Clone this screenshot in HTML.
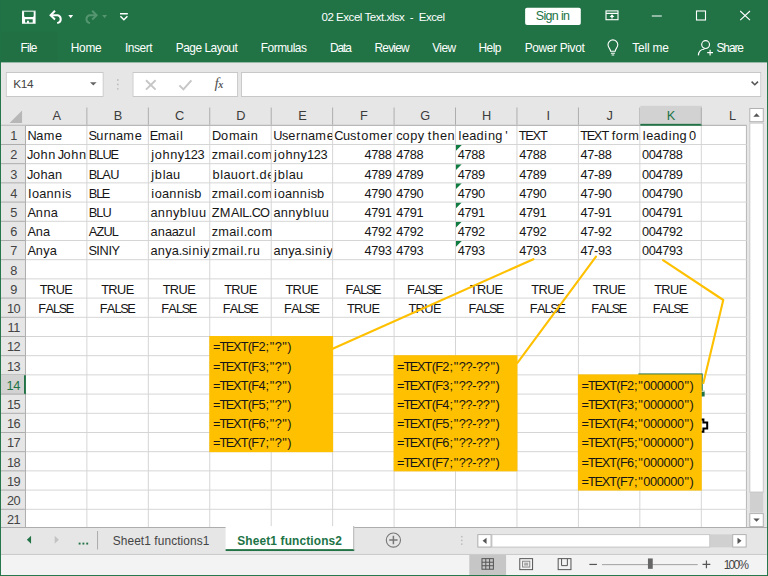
<!DOCTYPE html>
<html><head><meta charset="utf-8"><title>Excel</title>
<style>
*{box-sizing:border-box;margin:0;padding:0}
html,body{width:768px;height:576px;overflow:hidden;background:#e6e6e6}
body{font-family:"Liberation Sans",sans-serif}
#root{position:absolute;left:0;top:0;width:800px;height:600px;transform:scale(.96);transform-origin:0 0;background:#e6e6e6;overflow:hidden}
#root div,#root span,#root svg,#root i,#root b{position:absolute}
.ui{font-size:12px;color:#fff;white-space:nowrap;line-height:16px}
#top{left:0;top:0;width:800px;height:64.8px;background:#217346}
#frame{left:0;top:0;width:800px;height:600px;border:1px solid #217346;border-top:0;pointer-events:none}
#grid{left:0;top:110px;width:778px;height:439.4px;overflow:hidden}
.white{left:26px;top:20px;width:752px;height:420px;background:#fff;border-right:1px solid #ababab}
.vl{top:0;width:1px;height:439px;background:#d4d4d4}
.hl{left:0;height:1px;width:778px;background:#d4d4d4}
.c{width:63px;height:20px;overflow:hidden;white-space:nowrap;font-size:13.3px;line-height:20px;color:#161616}
.c span{left:2px;top:1px}
.c.ov{overflow:visible}
.c.ctr span{left:0;width:63px;text-align:center}
.c.rt span{left:auto;right:3px}
.tri{left:0;top:0;width:0;height:0;border-top:6px solid #107c41;border-right:6px solid transparent}
.chbar{left:0;top:0;width:778px;height:21px;background:#e6e6e6;border-bottom:1px solid #ababab}
.ch{top:0;height:21px;text-align:center;font-size:13.3px;line-height:21px;color:#3c3c3c}
.ch .sep{right:0;top:2px;width:1px;height:18px;background:#ababab}
.chs{background:#d2d2d2;color:#217346;border-bottom:2px solid #217346}
.rhbar{left:0;top:21px;width:27px;height:418px;background:#e6e6e6;border-right:1px solid #ababab}
.rh{left:0;width:26px;height:20px;padding-left:2.4px;letter-spacing:-.4px;text-align:center;font-size:13.3px;line-height:22.5px;color:#444;border-bottom:1px solid #ababab}
.rhs{background:#d2d2d2;color:#217346;border-right:2px solid #217346;width:27px}
.corner{left:0;top:0}
.or{background:#ffc000}
.sel{border:2px solid #217346}
.fh{width:6px;height:6px;background:#217346;border:1px solid #fff;border-right:0;border-bottom:0}
.lines{left:0;top:0}
.t{white-space:pre}

.k-19{margin:0 -0.95px}.k-17{margin:0 -0.85px}.k-16{margin:0 -0.8px}.k-14{margin:0 -0.7px}.k-13{margin:0 -0.65px}.k-12{margin:0 -0.6px}.k-11{margin:0 -0.55px}.k-10{margin:0 -0.5px}.k-9{margin:0 -0.45px}.k-8{margin:0 -0.4px}.k-7{margin:0 -0.35px}.k-6{margin:0 -0.3px}.k-4{margin:0 -0.2px}.k-3{margin:0 -0.15px}.k1{margin:0 0.05px}.k3{margin:0 0.15px}.k5{margin:0 0.25px}.k6{margin:0 0.3px}.k9{margin:0 0.45px}.k10{margin:0 0.5px}.k13{margin:0 0.65px}.k19{margin:0 0.95px}
</style></head><body>
<div id="root">
<div id="top">
<div style="left:0;top:33px;width:60px;height:31px;background:#207044"></div>
<span class="t" style="left:334.90px;top:10.05px;font-size:12px;line-height:16px;letter-spacing:-0.488px;color:#fff;">02 Excel Text.xlsx  -  Excel</span>
<div style="left:547px;top:7.5px;width:57.5px;height:18.5px;background:#fff;border-radius:2px"></div>
<span class="t" style="left:558.12px;top:8.61px;font-size:13px;line-height:16px;letter-spacing:-0.688px;color:#217346;">Sign in</span>
<span class="t" style="left:21.35px;top:41.99px;font-size:12.4px;line-height:16px;letter-spacing:-0.758px;color:#fff;transform:scaleY(1.07);transform-origin:0 7.86px;">File</span>
<span class="t" style="left:73.70px;top:41.99px;font-size:12.4px;line-height:16px;letter-spacing:-0.262px;color:#fff;transform:scaleY(1.07);transform-origin:0 7.86px;">Home</span>
<span class="t" style="left:130.21px;top:41.99px;font-size:12.4px;line-height:16px;letter-spacing:-0.473px;color:#fff;transform:scaleY(1.07);transform-origin:0 7.86px;">Insert</span>
<span class="t" style="left:183.07px;top:41.99px;font-size:12.4px;line-height:16px;letter-spacing:-0.505px;color:#fff;transform:scaleY(1.07);transform-origin:0 7.86px;">Page Layout</span>
<span class="t" style="left:271.61px;top:41.99px;font-size:12.4px;line-height:16px;letter-spacing:-0.500px;color:#fff;transform:scaleY(1.07);transform-origin:0 7.86px;">Formulas</span>
<span class="t" style="left:343.75px;top:41.99px;font-size:12.4px;line-height:16px;letter-spacing:-1.092px;color:#fff;transform:scaleY(1.07);transform-origin:0 7.86px;">Data</span>
<span class="t" style="left:390.10px;top:41.99px;font-size:12.4px;line-height:16px;letter-spacing:-0.788px;color:#fff;transform:scaleY(1.07);transform-origin:0 7.86px;">Review</span>
<span class="t" style="left:450.26px;top:41.99px;font-size:12.4px;line-height:16px;letter-spacing:-0.638px;color:#fff;transform:scaleY(1.07);transform-origin:0 7.86px;">View</span>
<span class="t" style="left:498.44px;top:41.99px;font-size:12.4px;line-height:16px;letter-spacing:-0.515px;color:#fff;transform:scaleY(1.07);transform-origin:0 7.86px;">Help</span>
<span class="t" style="left:546.61px;top:41.99px;font-size:12.4px;line-height:16px;letter-spacing:-0.366px;color:#fff;transform:scaleY(1.07);transform-origin:0 7.86px;">Power Pivot</span>
<span class="t" style="left:658.59px;top:41.99px;font-size:12.4px;line-height:16px;letter-spacing:-0.166px;color:#fff;transform:scaleY(1.07);transform-origin:0 7.86px;">Tell me</span>
<span class="t" style="left:746.35px;top:41.99px;font-size:12.4px;line-height:16px;letter-spacing:-1.111px;color:#fff;transform:scaleY(1.07);transform-origin:0 7.86px;">Share</span>
<svg style="left:0;top:0" width="800" height="64" viewBox="0 0 768 61.44">
<g fill="none" stroke="#fff" stroke-width="1.25">
<!-- save -->
<path fill="#fff" stroke="none" fill-rule="evenodd" d="M22 10.5H35.6V23.8H22Z M24.1 11.7H33.7V16.2L32.9 16.9H24.9L24.1 16.2Z M25.1 19.2H32.7V22.6H28.9V20.7H27V22.6H25.1Z"/>
<path fill="#217346" stroke="none" opacity=".45" d="M22 10.3H35.6V11.2H22Z"/>
<!-- undo -->
<path d="M51 15.3H57.6A3.9 3.9 0 0 1 58.6 22.6L57.2 23" stroke-width="2"/>
<path d="M55 10.8L50.6 15.3L55 19.4" stroke-width="2"/>
<!-- redo (dim) -->
<g stroke="#559671">
<path d="M96.2 15.3H89.6A3.9 3.9 0 0 0 88.6 22.6L90 23" stroke-width="2"/>
<path d="M92.2 10.8L96.6 15.3L92.2 19.4" stroke-width="2"/>
</g>
<!-- customize -->
<path d="M120 13.7H127.8" stroke-width="1.4"/>
<path d="M120.4 16.3L123.9 19.8L127.4 16.3" stroke-width="1.5"/>
<!-- ribbon display options -->
<rect x="606" y="10.9" width="12" height="8.8" stroke-width="1.1"/>
<path d="M606 13.4H618" stroke-width="1.1"/>
<path d="M612 18.6V15.4" stroke-width="1.4"/><path d="M609.6 16.9L612 14.3L614.4 16.9Z" fill="#fff" stroke="none"/>
<!-- min / max / close -->
<path d="M651.8 16H661.8" stroke-width="1.1"/>
<rect x="696.5" y="11" width="9" height="9" stroke-width="1.1"/>
<path d="M740.2 11L750 20.2M750 11L740.2 20.2" stroke-width="1.1"/>
<!-- bulb -->
<path d="M610.6 51.2C610.6 48.8 608 47.8 608 44.8A4.9 4.9 0 0 1 617.8 44.8C617.8 47.8 615.2 48.8 615.2 51.2Z" stroke-width="1.1"/>
<path d="M610.9 53.2H614.9M611.6 55H614.2" stroke-width="1.1"/>
<!-- share person -->
<circle cx="705.6" cy="44.6" r="3.9" stroke-width="1.15"/>
<path d="M698.4 55.4C698.6 51.2 701.4 49.2 704.4 49.2" stroke-width="1.15"/>
<path d="M707.2 52.6H713M710.1 49.7V55.5" stroke-width="1.15"/>
</g>
<g fill="#fff"><path d="M68.3 15.1H73.1L70.7 18.3Z"/></g>
<g fill="#559671"><path d="M102.2 15.1H107L104.6 18.3Z"/></g>
</svg>
</div>
<div style="left:6.15px;top:75.21px;width:101.56px;height:25.83px;background:#fff;border:1px solid #c6c6c6"></div>
<div style="left:138.23px;top:75.21px;width:109.69px;height:25.83px;background:#fff;border:1px solid #c6c6c6"></div>
<div style="left:251.04px;top:75.21px;width:542.40px;height:25.83px;background:#fff;border:1px solid #c6c6c6"></div>
<span class="t" style="left:13.85px;top:80.47px;font-size:12.3px;line-height:16px;letter-spacing:-0.370px;color:#444;">K14</span>
<svg style="left:0;top:64px" width="800" height="46" viewBox="0 61.44 768 44.16">
<path d="M90 82.2H96.6L93.3 85.5Z" fill="#666"/>
<g fill="#bdbdbd"><circle cx="117.8" cy="80" r="0.9"/><circle cx="117.8" cy="84.4" r="0.9"/><circle cx="117.8" cy="88.8" r="0.9"/></g>
<path d="M146 80.2L155.6 89.6M155.6 80.2L146 89.6" stroke="#c6c6c6" stroke-width="1.9" fill="none"/>
<path d="M179.4 85.4L183.4 89.4L191.4 80.4" stroke="#c6c6c6" stroke-width="2" fill="none"/>
<path d="M751.6 81.6L754.8 84.8L758 81.6" stroke="#555" stroke-width="1.5" fill="none"/>
</svg>
<span class="t" style="left:223.54px;top:79.06px;font-family:'Liberation Serif',serif;font-style:italic;font-weight:normal;font-size:16px;line-height:16px;color:#555;letter-spacing:-.6px">f<span style="position:static;font-size:10.5px;font-weight:bold">x</span></span>
<div id="grid">
<div class="white"></div>
<div class="vl" style="left:26px"></div>
<div class="vl" style="left:90px"></div>
<div class="vl" style="left:154px"></div>
<div class="vl" style="left:218px"></div>
<div class="vl" style="left:282px"></div>
<div class="vl" style="left:346px"></div>
<div class="vl" style="left:410px"></div>
<div class="vl" style="left:474px"></div>
<div class="vl" style="left:538px"></div>
<div class="vl" style="left:602px"></div>
<div class="vl" style="left:666px"></div>
<div class="vl" style="left:730px"></div>
<div class="vl" style="left:794px"></div>
<div class="hl" style="top:20px"></div>
<div class="hl" style="top:40px"></div>
<div class="hl" style="top:60px"></div>
<div class="hl" style="top:80px"></div>
<div class="hl" style="top:100px"></div>
<div class="hl" style="top:120px"></div>
<div class="hl" style="top:140px"></div>
<div class="hl" style="top:160px"></div>
<div class="hl" style="top:180px"></div>
<div class="hl" style="top:200px"></div>
<div class="hl" style="top:220px"></div>
<div class="hl" style="top:240px"></div>
<div class="hl" style="top:260px"></div>
<div class="hl" style="top:280px"></div>
<div class="hl" style="top:300px"></div>
<div class="hl" style="top:320px"></div>
<div class="hl" style="top:340px"></div>
<div class="hl" style="top:360px"></div>
<div class="hl" style="top:380px"></div>
<div class="hl" style="top:400px"></div>
<div class="hl" style="top:420px"></div>
<div class="hl" style="top:440px"></div>
<div class="hl" style="top:460px"></div>
<div class="sel" style="left:665px;top:279px;width:67px;height:23px"></div>
<div class="fh" style="left:728px;top:297px"></div>
<svg style="left:0;top:0" width="778" height="439" viewBox="0 105.6 746.88 421.44"><path d="M697.6 419.6H703.4V422.6H707.2V428.6H703.4V431.8H697.6V428.6H693.8V422.6H697.6Z" fill="#fff" stroke="#000" stroke-width="2"/></svg>
<div class="or" style="left:218px;top:240px;width:129px;height:121px"></div>
<div class="or" style="left:410px;top:260px;width:129px;height:121px"></div>
<div class="or" style="left:602px;top:280px;width:129px;height:121px"></div>
<div class="c" style="left:27px;top:21px"><span style=""><a class="k-6">N</a><a class="k-4">a</a><a class="k9">m</a><a class="k6">e</a></span></div>
<div class="c" style="left:91px;top:21px"><span style=""><a class="k-19">S</a><a class="k6">u</a><a class="k6">r</a><a class="k6">n</a><a class="k-4">a</a><a class="k9">m</a><a class="k6">e</a></span></div>
<div class="c" style="left:155px;top:21px"><span style=""><a class="k-19">E</a><a class="k9">m</a><a class="k-4">a</a><a class="k10">i</a><a class="k10">l</a></span></div>
<div class="c" style="left:219px;top:21px"><span style=""><a class="k-6">D</a><a class="k6">o</a><a class="k9">m</a><a class="k-4">a</a><a class="k10">i</a><a class="k6">n</a></span></div>
<div class="c" style="left:283px;top:21px"><span style=""><a class="k-6">U</a><a class="k-7">s</a><a class="k6">e</a><a class="k6">r</a><a class="k6">n</a><a class="k-4">a</a><a class="k9">m</a><a class="k6">e</a></span></div>
<div class="c" style="left:347px;top:21px"><span style=""><a class="k-16">C</a><a class="k6">u</a><a class="k-7">s</a><a class="k13">t</a><a class="k6">o</a><a class="k9">m</a><a class="k6">e</a><a class="k6">r</a></span></div>
<div class="c" style="left:411px;top:21px"><span style=""><a class="k-7">c</a><a class="k6">o</a><a class="k6">p</a><a class="k3">y</a><a class="k-7"> </a><a class="k13">t</a><a class="k6">h</a><a class="k6">e</a><a class="k6">n</a></span></div>
<div class="c" style="left:475px;top:21px"><span style=""><a class="k10">l</a><a class="k6">e</a><a class="k-4">a</a><a class="k6">d</a><a class="k10">i</a><a class="k6">n</a><a class="k-4">g</a><a class="k-7"> </a><a class="k5">'</a></span></div>
<div class="c" style="left:539px;top:21px"><span style=""><a class="k-11">T</a><a class="k-19">E</a><a class="k-9">X</a><a class="k-11">T</a></span></div>
<div class="c" style="left:603px;top:21px"><span style=""><a class="k-11">T</a><a class="k-19">E</a><a class="k-9">X</a><a class="k-11">T</a><a class="k-7"> </a><a class="k3">f</a><a class="k6">o</a><a class="k6">r</a><a class="k9">m</a></span></div>
<div class="c ov" style="left:667px;top:21px"><span style=""><a class="k10">l</a><a class="k6">e</a><a class="k-4">a</a><a class="k6">d</a><a class="k10">i</a><a class="k6">n</a><a class="k-4">g</a><a class="k-7"> </a><a class="k-4">0</a></span></div>
<div class="c" style="left:27px;top:41px"><span style=""><a class="k-17">J</a><a class="k6">o</a><a class="k6">h</a><a class="k6">n</a><a class="k-7"> </a><a class="k-17">J</a><a class="k6">o</a><a class="k6">h</a><a class="k6">n</a></span></div>
<div class="c" style="left:91px;top:41px"><span style=""><a class="k-9">B</a><a class="k-14">L</a><a class="k-6">U</a><a class="k-19">E</a></span></div>
<div class="c" style="left:155px;top:41px"><span style=""><a class="k10">j</a><a class="k6">o</a><a class="k6">h</a><a class="k6">n</a><a class="k3">y</a><a class="k-4">1</a><a class="k-4">2</a><a class="k-4">3</a></span></div>
<div class="c" style="left:219px;top:41px"><span style=""><a class="k-7">z</a><a class="k9">m</a><a class="k-4">a</a><a class="k10">i</a><a class="k10">l</a><a class="k3">.</a><a class="k-7">c</a><a class="k6">o</a><a class="k9">m</a></span></div>
<div class="c" style="left:283px;top:41px"><span style=""><a class="k10">j</a><a class="k6">o</a><a class="k6">h</a><a class="k6">n</a><a class="k3">y</a><a class="k-4">1</a><a class="k-4">2</a><a class="k-4">3</a></span></div>
<div class="c rt" style="left:347px;top:41px"><span style="right:2px"><a class="k-4">4</a><a class="k-4">7</a><a class="k-4">8</a><a class="k-4">8</a></span></div>
<div class="c" style="left:411px;top:41px"><span style=""><a class="k-4">4</a><a class="k-4">7</a><a class="k-4">8</a><a class="k-4">8</a></span></div>
<div class="c" style="left:475px;top:41px"><i class="tri"></i><span style=""><a class="k-4">4</a><a class="k-4">7</a><a class="k-4">8</a><a class="k-4">8</a></span></div>
<div class="c" style="left:539px;top:41px"><span style=""><a class="k-4">4</a><a class="k-4">7</a><a class="k-4">8</a><a class="k-4">8</a></span></div>
<div class="c" style="left:603px;top:41px"><span style=""><a class="k-4">4</a><a class="k-4">7</a><a class="k-4">-</a><a class="k-4">8</a><a class="k-4">8</a></span></div>
<div class="c ov" style="left:667px;top:41px"><span style=""><a class="k-4">0</a><a class="k-4">0</a><a class="k-4">4</a><a class="k-4">7</a><a class="k-4">8</a><a class="k-4">8</a></span></div>
<div class="c" style="left:27px;top:61px"><span style=""><a class="k-17">J</a><a class="k6">o</a><a class="k6">h</a><a class="k-4">a</a><a class="k6">n</a></span></div>
<div class="c" style="left:91px;top:61px"><span style=""><a class="k-9">B</a><a class="k-14">L</a><a class="k-9">A</a><a class="k-6">U</a></span></div>
<div class="c" style="left:155px;top:61px"><span style=""><a class="k10">j</a><a class="k6">b</a><a class="k10">l</a><a class="k-4">a</a><a class="k6">u</a></span></div>
<div class="c" style="left:219px;top:61px"><span style=""><a class="k6">b</a><a class="k10">l</a><a class="k-4">a</a><a class="k6">u</a><a class="k6">o</a><a class="k6">r</a><a class="k13">t</a><a class="k3">.</a><a class="k6">d</a><a class="k6">e</a></span></div>
<div class="c" style="left:283px;top:61px"><span style=""><a class="k10">j</a><a class="k6">b</a><a class="k10">l</a><a class="k-4">a</a><a class="k6">u</a></span></div>
<div class="c rt" style="left:347px;top:61px"><span style="right:2px"><a class="k-4">4</a><a class="k-4">7</a><a class="k-4">8</a><a class="k-4">9</a></span></div>
<div class="c" style="left:411px;top:61px"><span style=""><a class="k-4">4</a><a class="k-4">7</a><a class="k-4">8</a><a class="k-4">9</a></span></div>
<div class="c" style="left:475px;top:61px"><i class="tri"></i><span style=""><a class="k-4">4</a><a class="k-4">7</a><a class="k-4">8</a><a class="k-4">9</a></span></div>
<div class="c" style="left:539px;top:61px"><span style=""><a class="k-4">4</a><a class="k-4">7</a><a class="k-4">8</a><a class="k-4">9</a></span></div>
<div class="c" style="left:603px;top:61px"><span style=""><a class="k-4">4</a><a class="k-4">7</a><a class="k-4">-</a><a class="k-4">8</a><a class="k-4">9</a></span></div>
<div class="c ov" style="left:667px;top:61px"><span style=""><a class="k-4">0</a><a class="k-4">0</a><a class="k-4">4</a><a class="k-4">7</a><a class="k-4">8</a><a class="k-4">9</a></span></div>
<div class="c" style="left:27px;top:81px"><span style=""><a class="k3">I</a><a class="k6">o</a><a class="k-4">a</a><a class="k6">n</a><a class="k6">n</a><a class="k10">i</a><a class="k-7">s</a></span></div>
<div class="c" style="left:91px;top:81px"><span style=""><a class="k-9">B</a><a class="k-14">L</a><a class="k-19">E</a></span></div>
<div class="c" style="left:155px;top:81px"><span style=""><a class="k10">i</a><a class="k6">o</a><a class="k-4">a</a><a class="k6">n</a><a class="k6">n</a><a class="k10">i</a><a class="k-7">s</a><a class="k6">b</a></span></div>
<div class="c" style="left:219px;top:81px"><span style=""><a class="k-7">z</a><a class="k9">m</a><a class="k-4">a</a><a class="k10">i</a><a class="k10">l</a><a class="k3">.</a><a class="k-7">c</a><a class="k6">o</a><a class="k9">m</a></span></div>
<div class="c" style="left:283px;top:81px"><span style=""><a class="k10">i</a><a class="k6">o</a><a class="k-4">a</a><a class="k6">n</a><a class="k6">n</a><a class="k10">i</a><a class="k-7">s</a><a class="k6">b</a></span></div>
<div class="c rt" style="left:347px;top:81px"><span style="right:2px"><a class="k-4">4</a><a class="k-4">7</a><a class="k-4">9</a><a class="k-4">0</a></span></div>
<div class="c" style="left:411px;top:81px"><span style=""><a class="k-4">4</a><a class="k-4">7</a><a class="k-4">9</a><a class="k-4">0</a></span></div>
<div class="c" style="left:475px;top:81px"><i class="tri"></i><span style=""><a class="k-4">4</a><a class="k-4">7</a><a class="k-4">9</a><a class="k-4">0</a></span></div>
<div class="c" style="left:539px;top:81px"><span style=""><a class="k-4">4</a><a class="k-4">7</a><a class="k-4">9</a><a class="k-4">0</a></span></div>
<div class="c" style="left:603px;top:81px"><span style=""><a class="k-4">4</a><a class="k-4">7</a><a class="k-4">-</a><a class="k-4">9</a><a class="k-4">0</a></span></div>
<div class="c ov" style="left:667px;top:81px"><span style=""><a class="k-4">0</a><a class="k-4">0</a><a class="k-4">4</a><a class="k-4">7</a><a class="k-4">9</a><a class="k-4">0</a></span></div>
<div class="c" style="left:27px;top:101px"><span style=""><a class="k-9">A</a><a class="k6">n</a><a class="k6">n</a><a class="k-4">a</a></span></div>
<div class="c" style="left:91px;top:101px"><span style=""><a class="k-9">B</a><a class="k-14">L</a><a class="k-6">U</a></span></div>
<div class="c" style="left:155px;top:101px"><span style=""><a class="k-4">a</a><a class="k6">n</a><a class="k6">n</a><a class="k3">y</a><a class="k6">b</a><a class="k10">l</a><a class="k6">u</a><a class="k6">u</a></span></div>
<div class="c" style="left:219px;top:101px"><span style=""><a class="k-11">Z</a><a class="k19">M</a><a class="k-9">A</a><a class="k3">I</a><a class="k-14">L</a><a class="k3">.</a><a class="k-16">C</a><a class="k-3">O</a></span></div>
<div class="c" style="left:283px;top:101px"><span style=""><a class="k-4">a</a><a class="k6">n</a><a class="k6">n</a><a class="k3">y</a><a class="k6">b</a><a class="k10">l</a><a class="k6">u</a><a class="k6">u</a></span></div>
<div class="c rt" style="left:347px;top:101px"><span style="right:2px"><a class="k-4">4</a><a class="k-4">7</a><a class="k-4">9</a><a class="k-4">1</a></span></div>
<div class="c" style="left:411px;top:101px"><span style=""><a class="k-4">4</a><a class="k-4">7</a><a class="k-4">9</a><a class="k-4">1</a></span></div>
<div class="c" style="left:475px;top:101px"><i class="tri"></i><span style=""><a class="k-4">4</a><a class="k-4">7</a><a class="k-4">9</a><a class="k-4">1</a></span></div>
<div class="c" style="left:539px;top:101px"><span style=""><a class="k-4">4</a><a class="k-4">7</a><a class="k-4">9</a><a class="k-4">1</a></span></div>
<div class="c" style="left:603px;top:101px"><span style=""><a class="k-4">4</a><a class="k-4">7</a><a class="k-4">-</a><a class="k-4">9</a><a class="k-4">1</a></span></div>
<div class="c ov" style="left:667px;top:101px"><span style=""><a class="k-4">0</a><a class="k-4">0</a><a class="k-4">4</a><a class="k-4">7</a><a class="k-4">9</a><a class="k-4">1</a></span></div>
<div class="c" style="left:27px;top:121px"><span style=""><a class="k-9">A</a><a class="k6">n</a><a class="k-4">a</a></span></div>
<div class="c" style="left:91px;top:121px"><span style=""><a class="k-9">A</a><a class="k-11">Z</a><a class="k-6">U</a><a class="k-14">L</a></span></div>
<div class="c" style="left:155px;top:121px"><span style=""><a class="k-4">a</a><a class="k6">n</a><a class="k-4">a</a><a class="k-4">a</a><a class="k-7">z</a><a class="k6">u</a><a class="k10">l</a></span></div>
<div class="c ov" style="left:219px;top:121px"><span style=""><a class="k-7">z</a><a class="k9">m</a><a class="k-4">a</a><a class="k10">i</a><a class="k10">l</a><a class="k3">.</a><a class="k-7">c</a><a class="k6">o</a><a class="k9">m</a></span></div>
<div class="c rt" style="left:347px;top:121px"><span style="right:2px"><a class="k-4">4</a><a class="k-4">7</a><a class="k-4">9</a><a class="k-4">2</a></span></div>
<div class="c" style="left:411px;top:121px"><span style=""><a class="k-4">4</a><a class="k-4">7</a><a class="k-4">9</a><a class="k-4">2</a></span></div>
<div class="c" style="left:475px;top:121px"><i class="tri"></i><span style=""><a class="k-4">4</a><a class="k-4">7</a><a class="k-4">9</a><a class="k-4">2</a></span></div>
<div class="c" style="left:539px;top:121px"><span style=""><a class="k-4">4</a><a class="k-4">7</a><a class="k-4">9</a><a class="k-4">2</a></span></div>
<div class="c" style="left:603px;top:121px"><span style=""><a class="k-4">4</a><a class="k-4">7</a><a class="k-4">-</a><a class="k-4">9</a><a class="k-4">2</a></span></div>
<div class="c ov" style="left:667px;top:121px"><span style=""><a class="k-4">0</a><a class="k-4">0</a><a class="k-4">4</a><a class="k-4">7</a><a class="k-4">9</a><a class="k-4">2</a></span></div>
<div class="c" style="left:27px;top:141px"><span style=""><a class="k-9">A</a><a class="k6">n</a><a class="k3">y</a><a class="k-4">a</a></span></div>
<div class="c" style="left:91px;top:141px"><span style=""><a class="k-19">S</a><a class="k3">I</a><a class="k-6">N</a><a class="k3">I</a><a class="k-19">Y</a></span></div>
<div class="c" style="left:155px;top:141px"><span style=""><a class="k-4">a</a><a class="k6">n</a><a class="k3">y</a><a class="k-4">a</a><a class="k3">.</a><a class="k-7">s</a><a class="k10">i</a><a class="k6">n</a><a class="k10">i</a><a class="k3">y</a></span></div>
<div class="c" style="left:219px;top:141px"><span style=""><a class="k-7">z</a><a class="k9">m</a><a class="k-4">a</a><a class="k10">i</a><a class="k10">l</a><a class="k3">.</a><a class="k6">r</a><a class="k6">u</a></span></div>
<div class="c" style="left:283px;top:141px"><span style=""><a class="k-4">a</a><a class="k6">n</a><a class="k3">y</a><a class="k-4">a</a><a class="k3">.</a><a class="k-7">s</a><a class="k10">i</a><a class="k6">n</a><a class="k10">i</a><a class="k3">y</a></span></div>
<div class="c rt" style="left:347px;top:141px"><span style="right:2px"><a class="k-4">4</a><a class="k-4">7</a><a class="k-4">9</a><a class="k-4">3</a></span></div>
<div class="c" style="left:411px;top:141px"><span style=""><a class="k-4">4</a><a class="k-4">7</a><a class="k-4">9</a><a class="k-4">3</a></span></div>
<div class="c" style="left:475px;top:141px"><i class="tri"></i><span style=""><a class="k-4">4</a><a class="k-4">7</a><a class="k-4">9</a><a class="k-4">3</a></span></div>
<div class="c" style="left:539px;top:141px"><span style=""><a class="k-4">4</a><a class="k-4">7</a><a class="k-4">9</a><a class="k-4">3</a></span></div>
<div class="c" style="left:603px;top:141px"><span style=""><a class="k-4">4</a><a class="k-4">7</a><a class="k-4">-</a><a class="k-4">9</a><a class="k-4">3</a></span></div>
<div class="c ov" style="left:667px;top:141px"><span style=""><a class="k-4">0</a><a class="k-4">0</a><a class="k-4">4</a><a class="k-4">7</a><a class="k-4">9</a><a class="k-4">3</a></span></div>
<div class="c ctr" style="left:27px;top:181px"><span style=""><a class="k-6">T</a><a class="k-10">R</a><a class="k1">U</a><a class="k-13">E</a></span></div>
<div class="c ctr" style="left:91px;top:181px"><span style=""><a class="k-6">T</a><a class="k-10">R</a><a class="k1">U</a><a class="k-13">E</a></span></div>
<div class="c ctr" style="left:155px;top:181px"><span style=""><a class="k-6">T</a><a class="k-10">R</a><a class="k1">U</a><a class="k-13">E</a></span></div>
<div class="c ctr" style="left:219px;top:181px"><span style=""><a class="k-6">T</a><a class="k-10">R</a><a class="k1">U</a><a class="k-13">E</a></span></div>
<div class="c ctr" style="left:283px;top:181px"><span style=""><a class="k-6">T</a><a class="k-10">R</a><a class="k1">U</a><a class="k-13">E</a></span></div>
<div class="c ctr" style="left:347px;top:181px"><span style=""><a class="k-9">F</a><a class="k-6">A</a><a class="k-12">L</a><a class="k-16">S</a><a class="k-16">E</a></span></div>
<div class="c ctr" style="left:411px;top:181px"><span style=""><a class="k-9">F</a><a class="k-6">A</a><a class="k-12">L</a><a class="k-16">S</a><a class="k-16">E</a></span></div>
<div class="c ctr" style="left:475px;top:181px"><span style=""><a class="k-6">T</a><a class="k-10">R</a><a class="k1">U</a><a class="k-13">E</a></span></div>
<div class="c ctr" style="left:539px;top:181px"><span style=""><a class="k-6">T</a><a class="k-10">R</a><a class="k1">U</a><a class="k-13">E</a></span></div>
<div class="c ctr" style="left:603px;top:181px"><span style=""><a class="k-6">T</a><a class="k-10">R</a><a class="k1">U</a><a class="k-13">E</a></span></div>
<div class="c ctr" style="left:667px;top:181px"><span style=""><a class="k-6">T</a><a class="k-10">R</a><a class="k1">U</a><a class="k-13">E</a></span></div>
<div class="c ctr" style="left:27px;top:201px"><span style=""><a class="k-9">F</a><a class="k-6">A</a><a class="k-12">L</a><a class="k-16">S</a><a class="k-16">E</a></span></div>
<div class="c ctr" style="left:91px;top:201px"><span style=""><a class="k-9">F</a><a class="k-6">A</a><a class="k-12">L</a><a class="k-16">S</a><a class="k-16">E</a></span></div>
<div class="c ctr" style="left:155px;top:201px"><span style=""><a class="k-9">F</a><a class="k-6">A</a><a class="k-12">L</a><a class="k-16">S</a><a class="k-16">E</a></span></div>
<div class="c ctr" style="left:219px;top:201px"><span style=""><a class="k-9">F</a><a class="k-6">A</a><a class="k-12">L</a><a class="k-16">S</a><a class="k-16">E</a></span></div>
<div class="c ctr" style="left:283px;top:201px"><span style=""><a class="k-9">F</a><a class="k-6">A</a><a class="k-12">L</a><a class="k-16">S</a><a class="k-16">E</a></span></div>
<div class="c ctr" style="left:347px;top:201px"><span style=""><a class="k-6">T</a><a class="k-10">R</a><a class="k1">U</a><a class="k-13">E</a></span></div>
<div class="c ctr" style="left:411px;top:201px"><span style=""><a class="k-6">T</a><a class="k-10">R</a><a class="k1">U</a><a class="k-13">E</a></span></div>
<div class="c ctr" style="left:475px;top:201px"><span style=""><a class="k-9">F</a><a class="k-6">A</a><a class="k-12">L</a><a class="k-16">S</a><a class="k-16">E</a></span></div>
<div class="c ctr" style="left:539px;top:201px"><span style=""><a class="k-9">F</a><a class="k-6">A</a><a class="k-12">L</a><a class="k-16">S</a><a class="k-16">E</a></span></div>
<div class="c ctr" style="left:603px;top:201px"><span style=""><a class="k-9">F</a><a class="k-6">A</a><a class="k-12">L</a><a class="k-16">S</a><a class="k-16">E</a></span></div>
<div class="c ctr" style="left:667px;top:201px"><span style=""><a class="k-9">F</a><a class="k-6">A</a><a class="k-12">L</a><a class="k-16">S</a><a class="k-16">E</a></span></div>
<span class="t" style="left:222.19px;top:243.92px;font-size:13.3px;line-height:16px;color:#161616;"><a class="k-8">=</a><a class="k-11">T</a><a class="k-19">E</a><a class="k-9">X</a><a class="k-11">T</a><a class="k-4">(</a><a class="k-11">F</a><a class="k-4">2</a><a class="k3">;</a><a class="k13">&quot;</a><a class="k-4">?</a><a class="k13">&quot;</a><a class="k-4">)</a></span>
<span class="t" style="left:222.19px;top:263.92px;font-size:13.3px;line-height:16px;color:#161616;"><a class="k-8">=</a><a class="k-11">T</a><a class="k-19">E</a><a class="k-9">X</a><a class="k-11">T</a><a class="k-4">(</a><a class="k-11">F</a><a class="k-4">3</a><a class="k3">;</a><a class="k13">&quot;</a><a class="k-4">?</a><a class="k13">&quot;</a><a class="k-4">)</a></span>
<span class="t" style="left:222.19px;top:283.92px;font-size:13.3px;line-height:16px;color:#161616;"><a class="k-8">=</a><a class="k-11">T</a><a class="k-19">E</a><a class="k-9">X</a><a class="k-11">T</a><a class="k-4">(</a><a class="k-11">F</a><a class="k-4">4</a><a class="k3">;</a><a class="k13">&quot;</a><a class="k-4">?</a><a class="k13">&quot;</a><a class="k-4">)</a></span>
<span class="t" style="left:222.19px;top:303.92px;font-size:13.3px;line-height:16px;color:#161616;"><a class="k-8">=</a><a class="k-11">T</a><a class="k-19">E</a><a class="k-9">X</a><a class="k-11">T</a><a class="k-4">(</a><a class="k-11">F</a><a class="k-4">5</a><a class="k3">;</a><a class="k13">&quot;</a><a class="k-4">?</a><a class="k13">&quot;</a><a class="k-4">)</a></span>
<span class="t" style="left:222.19px;top:323.92px;font-size:13.3px;line-height:16px;color:#161616;"><a class="k-8">=</a><a class="k-11">T</a><a class="k-19">E</a><a class="k-9">X</a><a class="k-11">T</a><a class="k-4">(</a><a class="k-11">F</a><a class="k-4">6</a><a class="k3">;</a><a class="k13">&quot;</a><a class="k-4">?</a><a class="k13">&quot;</a><a class="k-4">)</a></span>
<span class="t" style="left:222.19px;top:343.92px;font-size:13.3px;line-height:16px;color:#161616;"><a class="k-8">=</a><a class="k-11">T</a><a class="k-19">E</a><a class="k-9">X</a><a class="k-11">T</a><a class="k-4">(</a><a class="k-11">F</a><a class="k-4">7</a><a class="k3">;</a><a class="k13">&quot;</a><a class="k-4">?</a><a class="k13">&quot;</a><a class="k-4">)</a></span>
<span class="t" style="left:413.85px;top:264.03px;font-size:13.3px;line-height:16px;color:#161616;"><a class="k-8">=</a><a class="k-11">T</a><a class="k-19">E</a><a class="k-9">X</a><a class="k-11">T</a><a class="k-4">(</a><a class="k-11">F</a><a class="k-4">2</a><a class="k3">;</a><a class="k13">&quot;</a><a class="k-4">?</a><a class="k-4">?</a><a class="k-4">-</a><a class="k-4">?</a><a class="k-4">?</a><a class="k13">&quot;</a><a class="k-4">)</a></span>
<span class="t" style="left:413.85px;top:284.03px;font-size:13.3px;line-height:16px;color:#161616;"><a class="k-8">=</a><a class="k-11">T</a><a class="k-19">E</a><a class="k-9">X</a><a class="k-11">T</a><a class="k-4">(</a><a class="k-11">F</a><a class="k-4">3</a><a class="k3">;</a><a class="k13">&quot;</a><a class="k-4">?</a><a class="k-4">?</a><a class="k-4">-</a><a class="k-4">?</a><a class="k-4">?</a><a class="k13">&quot;</a><a class="k-4">)</a></span>
<span class="t" style="left:413.85px;top:304.03px;font-size:13.3px;line-height:16px;color:#161616;"><a class="k-8">=</a><a class="k-11">T</a><a class="k-19">E</a><a class="k-9">X</a><a class="k-11">T</a><a class="k-4">(</a><a class="k-11">F</a><a class="k-4">4</a><a class="k3">;</a><a class="k13">&quot;</a><a class="k-4">?</a><a class="k-4">?</a><a class="k-4">-</a><a class="k-4">?</a><a class="k-4">?</a><a class="k13">&quot;</a><a class="k-4">)</a></span>
<span class="t" style="left:413.85px;top:324.03px;font-size:13.3px;line-height:16px;color:#161616;"><a class="k-8">=</a><a class="k-11">T</a><a class="k-19">E</a><a class="k-9">X</a><a class="k-11">T</a><a class="k-4">(</a><a class="k-11">F</a><a class="k-4">5</a><a class="k3">;</a><a class="k13">&quot;</a><a class="k-4">?</a><a class="k-4">?</a><a class="k-4">-</a><a class="k-4">?</a><a class="k-4">?</a><a class="k13">&quot;</a><a class="k-4">)</a></span>
<span class="t" style="left:413.85px;top:344.03px;font-size:13.3px;line-height:16px;color:#161616;"><a class="k-8">=</a><a class="k-11">T</a><a class="k-19">E</a><a class="k-9">X</a><a class="k-11">T</a><a class="k-4">(</a><a class="k-11">F</a><a class="k-4">6</a><a class="k3">;</a><a class="k13">&quot;</a><a class="k-4">?</a><a class="k-4">?</a><a class="k-4">-</a><a class="k-4">?</a><a class="k-4">?</a><a class="k13">&quot;</a><a class="k-4">)</a></span>
<span class="t" style="left:413.85px;top:364.03px;font-size:13.3px;line-height:16px;color:#161616;"><a class="k-8">=</a><a class="k-11">T</a><a class="k-19">E</a><a class="k-9">X</a><a class="k-11">T</a><a class="k-4">(</a><a class="k-11">F</a><a class="k-4">7</a><a class="k3">;</a><a class="k13">&quot;</a><a class="k-4">?</a><a class="k-4">?</a><a class="k-4">-</a><a class="k-4">?</a><a class="k-4">?</a><a class="k13">&quot;</a><a class="k-4">)</a></span>
<span class="t" style="left:606.15px;top:283.82px;font-size:13.3px;line-height:16px;color:#161616;"><a class="k-8">=</a><a class="k-11">T</a><a class="k-19">E</a><a class="k-9">X</a><a class="k-11">T</a><a class="k-4">(</a><a class="k-11">F</a><a class="k-4">2</a><a class="k3">;</a><a class="k13">&quot;</a><a class="k-4">0</a><a class="k-4">0</a><a class="k-4">0</a><a class="k-4">0</a><a class="k-4">0</a><a class="k-4">0</a><a class="k13">&quot;</a><a class="k-4">)</a></span>
<span class="t" style="left:606.15px;top:303.82px;font-size:13.3px;line-height:16px;color:#161616;"><a class="k-8">=</a><a class="k-11">T</a><a class="k-19">E</a><a class="k-9">X</a><a class="k-11">T</a><a class="k-4">(</a><a class="k-11">F</a><a class="k-4">3</a><a class="k3">;</a><a class="k13">&quot;</a><a class="k-4">0</a><a class="k-4">0</a><a class="k-4">0</a><a class="k-4">0</a><a class="k-4">0</a><a class="k-4">0</a><a class="k13">&quot;</a><a class="k-4">)</a></span>
<span class="t" style="left:606.15px;top:323.82px;font-size:13.3px;line-height:16px;color:#161616;"><a class="k-8">=</a><a class="k-11">T</a><a class="k-19">E</a><a class="k-9">X</a><a class="k-11">T</a><a class="k-4">(</a><a class="k-11">F</a><a class="k-4">4</a><a class="k3">;</a><a class="k13">&quot;</a><a class="k-4">0</a><a class="k-4">0</a><a class="k-4">0</a><a class="k-4">0</a><a class="k-4">0</a><a class="k-4">0</a><a class="k13">&quot;</a><a class="k-4">)</a></span>
<span class="t" style="left:606.15px;top:343.82px;font-size:13.3px;line-height:16px;color:#161616;"><a class="k-8">=</a><a class="k-11">T</a><a class="k-19">E</a><a class="k-9">X</a><a class="k-11">T</a><a class="k-4">(</a><a class="k-11">F</a><a class="k-4">5</a><a class="k3">;</a><a class="k13">&quot;</a><a class="k-4">0</a><a class="k-4">0</a><a class="k-4">0</a><a class="k-4">0</a><a class="k-4">0</a><a class="k-4">0</a><a class="k13">&quot;</a><a class="k-4">)</a></span>
<span class="t" style="left:606.15px;top:363.82px;font-size:13.3px;line-height:16px;color:#161616;"><a class="k-8">=</a><a class="k-11">T</a><a class="k-19">E</a><a class="k-9">X</a><a class="k-11">T</a><a class="k-4">(</a><a class="k-11">F</a><a class="k-4">6</a><a class="k3">;</a><a class="k13">&quot;</a><a class="k-4">0</a><a class="k-4">0</a><a class="k-4">0</a><a class="k-4">0</a><a class="k-4">0</a><a class="k-4">0</a><a class="k13">&quot;</a><a class="k-4">)</a></span>
<span class="t" style="left:606.15px;top:383.82px;font-size:13.3px;line-height:16px;color:#161616;"><a class="k-8">=</a><a class="k-11">T</a><a class="k-19">E</a><a class="k-9">X</a><a class="k-11">T</a><a class="k-4">(</a><a class="k-11">F</a><a class="k-4">7</a><a class="k3">;</a><a class="k13">&quot;</a><a class="k-4">0</a><a class="k-4">0</a><a class="k-4">0</a><a class="k-4">0</a><a class="k-4">0</a><a class="k-4">0</a><a class="k13">&quot;</a><a class="k-4">)</a></span>
<div class="chbar"></div>
<div class="ch" style="left:27px;width:64px"><b class="sep"></b>A</div>
<div class="ch" style="left:91px;width:64px"><b class="sep"></b>B</div>
<div class="ch" style="left:155px;width:64px"><b class="sep"></b>C</div>
<div class="ch" style="left:219px;width:64px"><b class="sep"></b>D</div>
<div class="ch" style="left:283px;width:64px"><b class="sep"></b>E</div>
<div class="ch" style="left:347px;width:64px"><b class="sep"></b>F</div>
<div class="ch" style="left:411px;width:64px"><b class="sep"></b>G</div>
<div class="ch" style="left:475px;width:64px"><b class="sep"></b>H</div>
<div class="ch" style="left:539px;width:64px"><b class="sep"></b>I</div>
<div class="ch" style="left:603px;width:64px"><b class="sep"></b>J</div>
<div class="ch chs" style="left:667px;width:64px"><b class="sep"></b>K</div>
<div class="ch" style="left:731px;width:64px"><b class="sep"></b>L</div>
<div class="rhbar"></div>
<div class="rh" style="top:21px">1</div>
<div class="rh" style="top:41px">2</div>
<div class="rh" style="top:61px">3</div>
<div class="rh" style="top:81px">4</div>
<div class="rh" style="top:101px">5</div>
<div class="rh" style="top:121px">6</div>
<div class="rh" style="top:141px">7</div>
<div class="rh" style="top:161px">8</div>
<div class="rh" style="top:181px">9</div>
<div class="rh" style="top:201px">10</div>
<div class="rh" style="top:221px">11</div>
<div class="rh" style="top:241px">12</div>
<div class="rh" style="top:261px">13</div>
<div class="rh rhs" style="top:281px">14</div>
<div class="rh" style="top:301px">15</div>
<div class="rh" style="top:321px">16</div>
<div class="rh" style="top:341px">17</div>
<div class="rh" style="top:361px">18</div>
<div class="rh" style="top:381px">19</div>
<div class="rh" style="top:401px">20</div>
<div class="rh" style="top:421px">21</div>
<div class="rh" style="top:441px">22</div>
<svg class="corner" width="27" height="21" viewBox="0 0 27 21"><path d="M23 5V18H10Z" fill="#b7b7b7"/></svg>
<svg class="lines" width="778" height="439" viewBox="0 110 778 439"><g fill="none" stroke="#ffc000" stroke-width="2.2" stroke-linecap="round" stroke-linejoin="round">
<path d="M346.5 363.3L555.6 270"/>
<path d="M539 378L620.8 267.4"/>
<path d="M690.6 271L753.4 312.5L732.7 399"/>
</g></svg>
</div>
<div style="left:0;top:548.96px;width:800px;height:28.54px;background:#e6e6e6;border-top:1px solid #ababab"></div>
<div style="left:0;top:577.40px;width:800px;height:22.92px;background:#f3f3f3;border-top:1px solid #c6c6c6"></div>
<div style="left:235.42px;top:548.44px;width:133.12px;height:25.42px;background:#fff;border-right:1px solid #ababab;border-bottom:2.2px solid #217346"></div>
<span class="t" style="left:117.40px;top:554.54px;font-size:12.4px;line-height:16px;letter-spacing:0.097px;color:#444;transform:scaleY(1.06);transform-origin:0 7.86px;">Sheet1 functions1</span>
<span class="t" style="left:247.19px;top:554.54px;font-size:12.4px;line-height:16px;letter-spacing:0.141px;color:#217346;font-weight:bold;transform:scaleY(1.06);transform-origin:0 7.86px;">Sheet1 functions2</span>
<span class="t" style="left:753.85px;top:579.85px;font-size:12.3px;line-height:16px;letter-spacing:-1.736px;color:#444;transform:scaleY(1.06);transform-origin:0 7.86px;">100%</span>
<svg style="left:0;top:548.96px" width="800" height="51.04" viewBox="0 527 768 49">
<path d="M31 535.8V543.8L26.8 539.8Z" fill="#217346"/>
<path d="M54.6 535.8V543.8L58.8 539.8Z" fill="#c3c3c3"/>
<g fill="#217346"><rect x="78.6" y="542.6" width="1.9" height="1.9"/><rect x="82.4" y="542.6" width="1.9" height="1.9"/><rect x="86.2" y="542.6" width="1.9" height="1.9"/></g>
<path d="M97.5 531V549.5" stroke="#ababab" stroke-width="1"/>
<circle cx="393.4" cy="540" r="7.1" fill="none" stroke="#777" stroke-width="1.1"/>
<path d="M389.2 540H397.6M393.4 535.8V544.2" stroke="#777" stroke-width="1.5" fill="none"/>
<g fill="#bdbdbd"><circle cx="461.8" cy="536.6" r="0.9"/><circle cx="461.8" cy="540.3" r="0.9"/><circle cx="461.8" cy="544" r="0.9"/></g>
<!-- h scrollbar -->
<rect x="477.5" y="534.3" width="255" height="13" fill="#d0d0d0"/>
<rect x="477.9" y="534.6" width="13.2" height="12.4" fill="#fff" stroke="#ababab" stroke-width=".9"/>
<path d="M486.6 537.6V544L482.6 540.8Z" fill="#555"/>
<rect x="492" y="534.6" width="217.8" height="12.4" fill="#fff" stroke="#c6c6c6" stroke-width=".9"/>
<rect x="732.8" y="534.6" width="13.4" height="12.4" fill="#fff" stroke="#ababab" stroke-width=".9"/>
<path d="M737.6 537.6V544L741.6 540.8Z" fill="#555"/>
<!-- view buttons -->
<rect x="469.3" y="555" width="36.8" height="21" fill="#c6c6c6"/>
<g fill="none" stroke="#555" stroke-width="1">
<rect x="482" y="558.6" width="11.4" height="10.6"/>
<path d="M485.8 558.6V569.2M489.6 558.6V569.2M482 562.2H493.4M482 565.7H493.4"/>
<rect x="519.8" y="558.6" width="12.8" height="11"/>
<rect x="522.6" y="561.2" width="7.2" height="5.8" stroke="#888"/>
<rect x="524.2" y="562.6" width="4" height="3" fill="#aaa" stroke="none"/>
<rect x="558.2" y="558.6" width="12.8" height="11"/>
<path d="M561.6 558.6V565.6H567.4V558.6" />
</g>
<path d="M589.4 564.4H597" stroke="#555" stroke-width="1.2"/>
<path d="M602 564.6H697.8" stroke="#a0a0a0" stroke-width="1"/>
<rect x="648" y="558.4" width="4.8" height="10.4" fill="#666"/>
<path d="M702.6 564.4H710.4M706.5 560.5V568.3" stroke="#555" stroke-width="1.2"/>
</svg>
<svg style="left:779.17px;top:108.33px" width="20.83" height="441.67" viewBox="748 104 20 424">
<rect x="750" y="108.8" width="13.4" height="13.2" fill="#fff" stroke="#ababab" stroke-width=".9"/>
<path d="M753.5 117L756.7 113.6L759.9 117Z" fill="#555"/>
<rect x="750" y="123" width="13.4" height="390" fill="#d0d0d0"/>
<rect x="750" y="123.4" width="13.4" height="369" fill="#fff" stroke="#c6c6c6" stroke-width=".9"/>
<rect x="750" y="514" width="13.4" height="13" fill="#fff" stroke="#ababab" stroke-width=".9"/>
<path d="M753.5 518.8L756.7 522.2L759.9 518.8Z" fill="#555"/>
</svg>
<div id="frame"></div>
</div>
</body></html>
